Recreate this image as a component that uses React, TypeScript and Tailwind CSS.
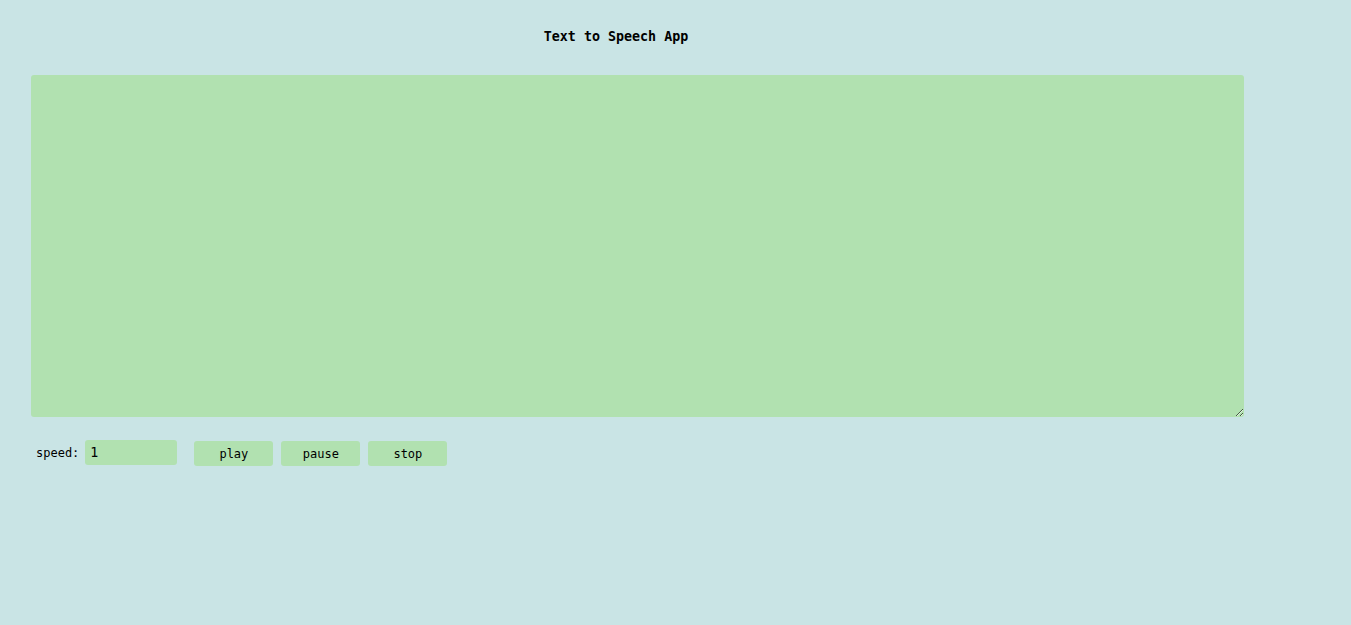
import { useState } from "react";

const mono = "font-['DejaVu_Sans_Mono',monospace]";

export default function App() {
  const [text, setText] = useState("");
  const [speed, setSpeed] = useState("1");

  return (
    <div className={`min-h-[625px] w-full bg-[#c9e4e5] text-black ${mono}`}>
      <div className="w-[1232px] pt-[29px] pb-[30px] text-center text-[13.33px] font-bold leading-[16px]">
        Text to Speech App
      </div>

      <div className="pl-[31px]">
        <textarea
          value={text}
          onChange={(e) => setText(e.target.value)}
          className="block h-[342px] w-[1213px] rounded-[3px] bg-[#b1e1b0] p-2 outline-none"
        />

        <div className="mt-[22px] flex items-center pl-[5px]">
          <label className="text-[12px] leading-[14px]">speed:</label>
          <input
            value={speed}
            onChange={(e) => setSpeed(e.target.value)}
            className="ml-[6px] h-[25px] w-[92px] rounded-[3px] bg-[#b1e1b0] px-[5px] text-[13.33px] outline-none"
          />
          <div className="ml-[17px] flex gap-[8px] pt-[2px]">
            {["play", "pause", "stop"].map((label) => (
              <button
                key={label}
                type="button"
                className="h-[25px] w-[79px] rounded-[3px] bg-[#b1e1b0] text-[12px]"
              >
                {label}
              </button>
            ))}
          </div>
        </div>
      </div>
    </div>
  );
}
